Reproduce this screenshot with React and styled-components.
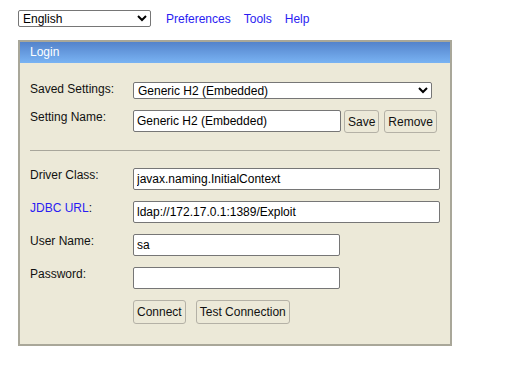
import React from "react";
import styled, { createGlobalStyle } from "styled-components";

const Global = createGlobalStyle`
  html, body { margin: 0; padding: 0; background: #ffffff; }
  body { font: 12px "Liberation Sans", Arial, sans-serif; color: #000; }
  * { box-sizing: border-box; }
`;

const Page = styled.div`
  padding: 10px 0 0 18px;
`;

const TopBar = styled.div`
  display: flex;
  align-items: center;
  height: 17px;
`;

const Select = styled.select`
  width: ${(p) => p.$w}px;
  height: 17px;
  font: 12px "Liberation Sans", Arial, sans-serif;
  color: #000;
  background: #fff;
  border: 1px solid #767676;
  border-radius: 2px;
  padding: 0;
  margin: 0;
`;

const Nav = styled.nav`
  display: flex;
  gap: 13px;
  margin-left: 15px;
`;

const Link = styled.a`
  color: #2a1cf2;
  text-decoration: none;
  line-height: 14px;
  cursor: pointer;
`;

const Panel = styled.div`
  margin-top: 13px;
  width: 434px;
  height: 306px;
  background: #ece9d8;
  border: 2px solid #a9a799;
`;

const Header = styled.div`
  height: 21px;
  line-height: 21px;
  padding-left: 10px;
  color: #ffffff;
  background: linear-gradient(to bottom, #5483cb, #79b3f3);
`;

const Body = styled.div`
  padding: 19px 10px 0 10px;
  display: grid;
  grid-template-columns: 103px 1fr;
  row-gap: 11px;
  align-items: start;
`;

const Label = styled.div`
  line-height: 14px;
  color: #111;
`;

const Field = styled.div`
  display: flex;
  align-items: flex-start;
  gap: 3px;
`;

const Input = styled.input`
  width: ${(p) => p.$w}px;
  height: 22px;
  font: 12px "Liberation Sans", Arial, sans-serif;
  color: #000;
  background: #fff;
  border: 1px solid #767676;
  border-radius: 2px;
  padding: 0 3px;
  margin: 0;
  outline: none;
`;

const ButtonGroup = styled.div`
  display: flex;
  gap: ${(p) => p.$gap}px;
`;

const Button = styled.button`
  height: ${(p) => p.$h}px;
  font: 12px "Liberation Sans", Arial, sans-serif;
  color: #111;
  background: #ece9d8;
  border: 1px solid #b4b1a6;
  border-radius: 3px;
  padding: 0 3px;
  margin: 0;
  cursor: pointer;
`;

const Separator = styled.hr`
  grid-column: 1 / -1;
  margin: 6px 0;
  border: none;
  height: 1px;
  background: #a8a69b;
`;

const Spacer = styled.div``;

export default function App() {
  return (
    <>
      <Global />
      <Page>
        <TopBar>
          <Select $w={133} defaultValue="en">
            <option value="en">English</option>
          </Select>
          <Nav>
            <Link>Preferences</Link>
            <Link>Tools</Link>
            <Link>Help</Link>
          </Nav>
        </TopBar>
        <Panel>
          <Header>Login</Header>
          <Body>
            <Label>Saved Settings:</Label>
            <Field>
              <Select $w={299} defaultValue="h2">
                <option value="h2">Generic H2 (Embedded)</option>
              </Select>
            </Field>

            <Label>Setting Name:</Label>
            <Field>
              <Input $w={208} defaultValue="Generic H2 (Embedded)" />
              <ButtonGroup $gap={5}>
                <Button $h={23}>Save</Button>
                <Button $h={23}>Remove</Button>
              </ButtonGroup>
            </Field>

            <Separator />

            <Label>Driver Class:</Label>
            <Field>
              <Input $w={307} defaultValue="javax.naming.InitialContext" />
            </Field>

            <Label>
              <Link>JDBC URL</Link>:
            </Label>
            <Field>
              <Input $w={307} defaultValue="ldap://172.17.0.1:1389/Exploit" />
            </Field>

            <Label>User Name:</Label>
            <Field>
              <Input $w={207} defaultValue="sa" />
            </Field>

            <Label>Password:</Label>
            <Field>
              <Input $w={207} type="password" defaultValue="" />
            </Field>

            <Spacer />
            <Field>
              <ButtonGroup $gap={10}>
                <Button $h={24}>Connect</Button>
                <Button $h={24}>Test Connection</Button>
              </ButtonGroup>
            </Field>
          </Body>
        </Panel>
      </Page>
    </>
  );
}
